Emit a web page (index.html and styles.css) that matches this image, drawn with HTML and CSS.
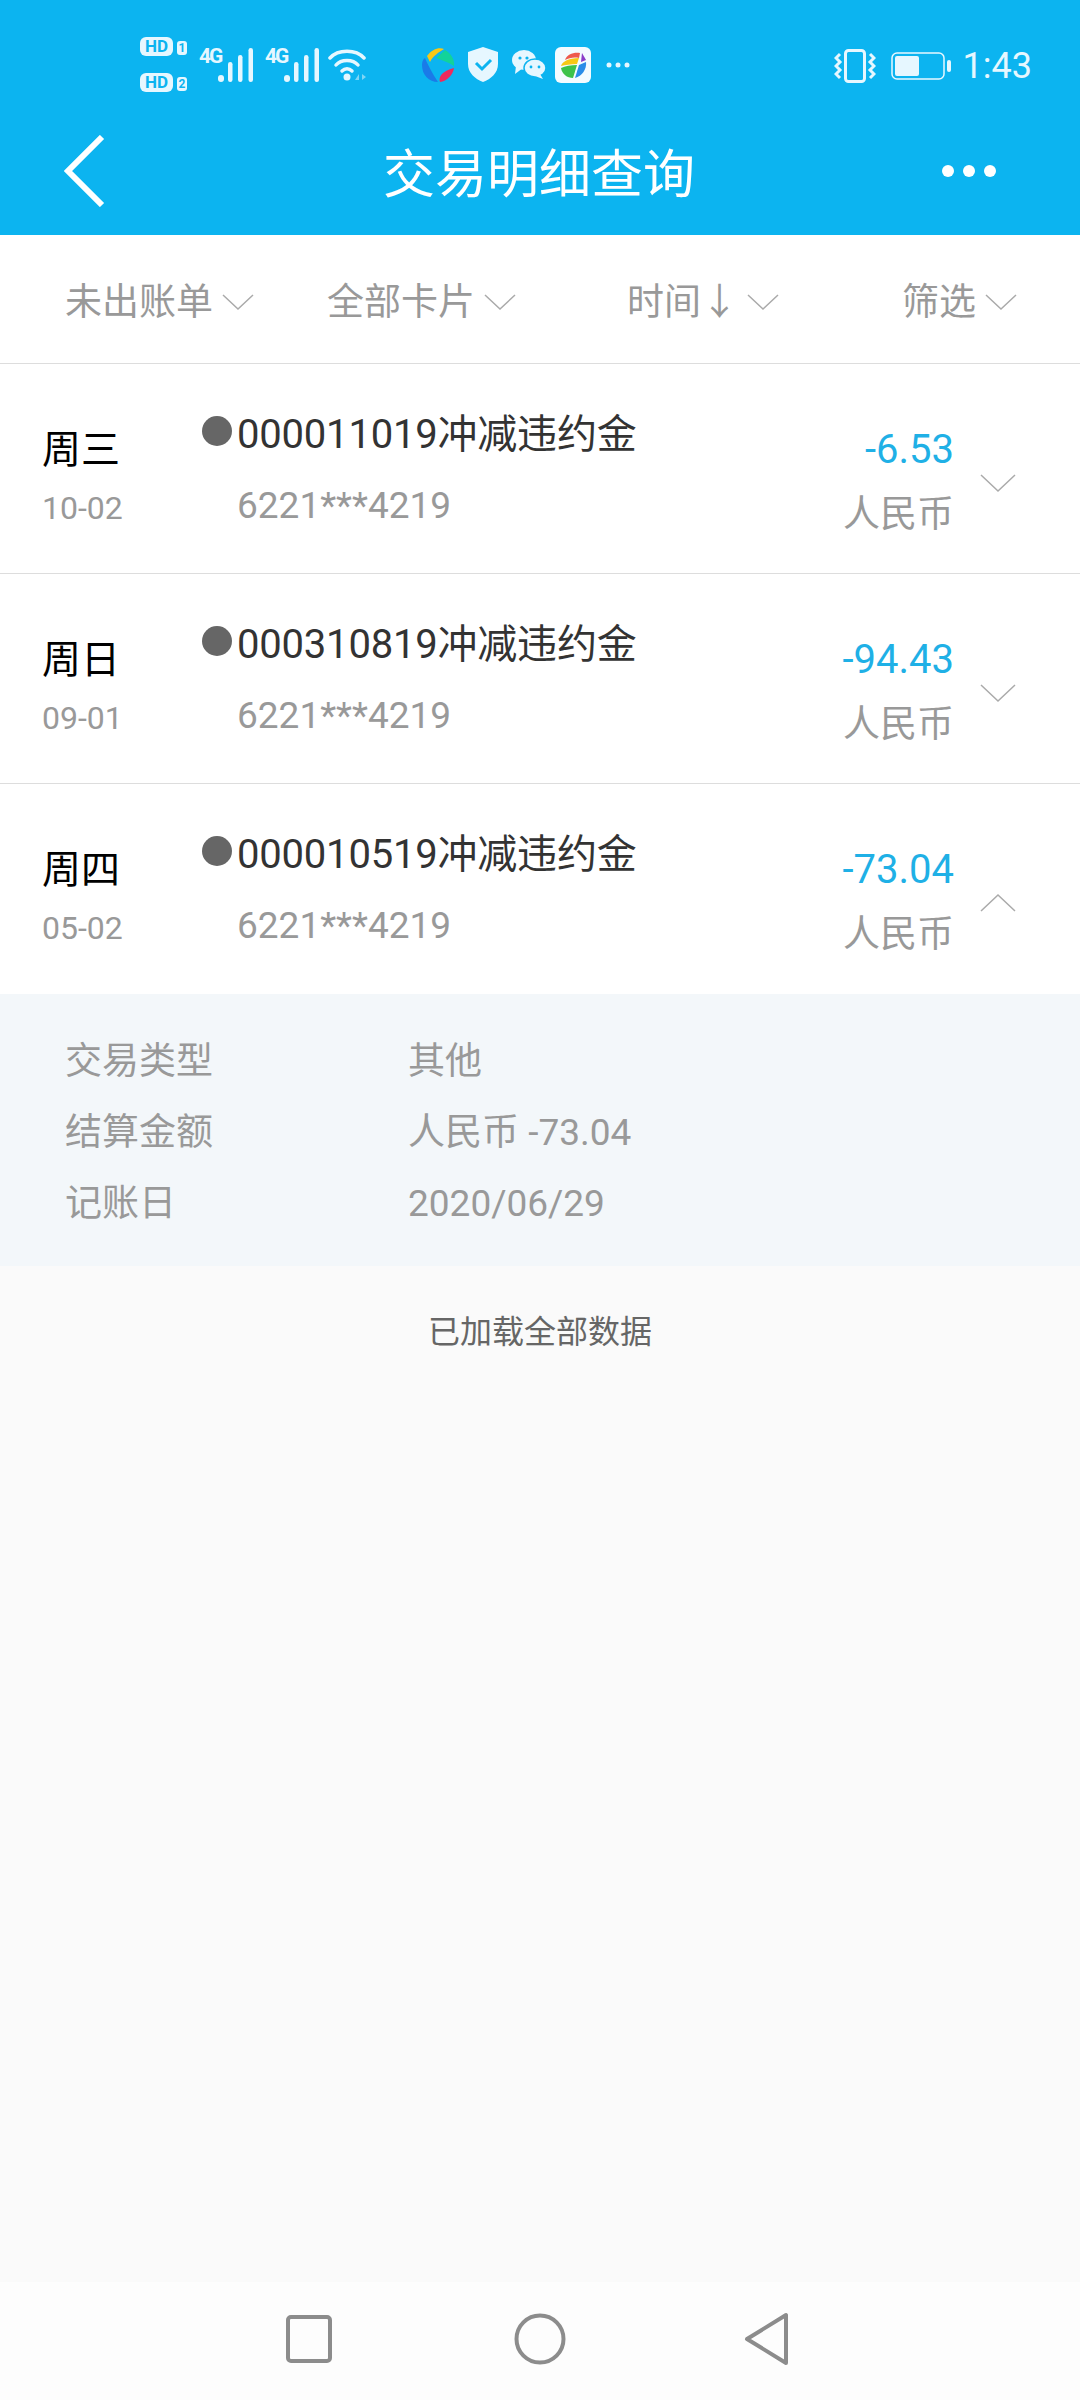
FILE: index.html
```html
<!DOCTYPE html>
<html lang="zh">
<head>
    <meta charset="UTF-8">
    <meta name="viewport" content="width=device-width, initial-scale=1.0">
    <title>交易明细查询</title>
    <link rel="stylesheet" href="styles.css">
</head>
<body>
    <div class="app">
        <header class="header">
            <div class="status-bar">
                <div class="status-left">
                    <div class="hd-col">
                        <div class="hd-row"><span class="hd">HD</span><span class="sim">1</span></div>
                        <div class="hd-row"><span class="hd">HD</span><span class="sim">2</span></div>
                    </div>
                    <span class="net">4G</span>
                    <svg class="signal" width="36" height="34" viewBox="0 0 36 34" fill="#e6f7ff">
                        <rect x="0" y="27" width="6" height="7" rx="3"/><rect x="10" y="14" width="4.5" height="20" rx="2.2"/><rect x="20" y="7" width="4.5" height="27" rx="2.2"/><rect x="30.5" y="0" width="4.5" height="34" rx="2.2"/>
                    </svg>
                    <span class="net">4G</span>
                    <svg class="signal" width="36" height="34" viewBox="0 0 36 34" fill="#e6f7ff">
                        <rect x="0" y="27" width="6" height="7" rx="3"/><rect x="10" y="14" width="4.5" height="20" rx="2.2"/><rect x="20" y="7" width="4.5" height="27" rx="2.2"/><rect x="30.5" y="0" width="4.5" height="34" rx="2.2"/>
                    </svg>
                    <svg class="wifi" width="40" height="34" viewBox="0 0 40 34" fill="none" stroke="#e6f7ff" stroke-width="3.5" stroke-linecap="round">
                        <path d="M2 10 C10 1 28 1 36 10"/><path d="M8 17 C13 11 25 11 30 17"/><path d="M14 23 C17 20 21 20 24 23"/><circle cx="19" cy="29" r="3.5" fill="#e6f7ff" stroke="none"/>
                        <path d="M31 26 L27 32 H31 Z M34 26 L38 29 L34 32 Z" fill="#7fd5f5" stroke="none"/>
                    </svg>
                </div>
                <div class="status-apps">
                    <svg width="34" height="36" viewBox="0 0 34 36">
                        <path d="M6 9 C11 2 18 0 23 2 C18 5 12 9 9 15 Z" fill="#f7c815"/>
                        <path d="M24 3 C30 6 34 13 33 19 C27 15 20 13 15 11 Z" fill="#12d39a"/>
                        <path d="M33 21 C32 28 26 34 19 35 C17 30 21 24 33 21 Z" fill="#ee2a5c"/>
                        <path d="M17 35 C8 35 1 28 1 18 C1 15 2 12 4 11 C7 18 11 26 17 35 Z" fill="#1a7be8"/>
                    </svg>
                    <svg width="32" height="37" viewBox="0 0 32 37">
                        <path d="M16 1 L31 6 V18 C31 27 24 33 16 36 C8 33 1 27 1 18 V6 Z" fill="#e6f7ff"/>
                        <path d="M9 17 L15 23 L24 14" fill="none" stroke="#0cb4f0" stroke-width="3"/>
                    </svg>
                    <svg width="35" height="30" viewBox="0 0 35 30" fill="#e6f7ff">
                        <ellipse cx="13" cy="10" rx="12" ry="10"/><path d="M5 16 L4 24 L12 18 Z"/>
                        <ellipse cx="24" cy="18" rx="11" ry="9" stroke="#0cb4f0" stroke-width="1.5"/><path d="M29 24 L32 29 L24 26 Z"/>
                        <circle cx="9" cy="8" r="1.6" fill="#0cb4f0"/><circle cx="16" cy="8" r="1.6" fill="#0cb4f0"/><circle cx="20" cy="17" r="1.4" fill="#0cb4f0"/><circle cx="28" cy="17" r="1.4" fill="#0cb4f0"/>
                    </svg>
                    <svg class="app-tile" width="36" height="36" viewBox="0 0 36 36">
                        <rect width="36" height="36" rx="6" fill="#f4fbff"/>
                        <path d="M10 13 C12 7 19 5 25 6 L24 11 C19 10 14 11 10 13 Z" fill="#ee5a4c"/>
                        <path d="M6 19 C7 15 13 11 24 11 L22 17 C16 17 10 18 6 19 Z" fill="#f7c815"/>
                        <path d="M6 21 C10 19 16 18 22 18 L18 31 C12 31 7 27 6 21 Z" fill="#3cc24a"/>
                        <path d="M24 18 L31 15 C32 22 27 29 20 31 Z" fill="#2a8de8"/>
                        <path d="M27 6 L31 13 L26 15 Z" fill="#8a3cc8"/>
                    </svg>
                    <svg class="app-more" width="24" height="6" viewBox="0 0 24 6" fill="#e6f7ff"><circle cx="3" cy="3" r="2.5"/><circle cx="12" cy="3" r="2.5"/><circle cx="21" cy="3" r="2.5"/></svg>
                </div>
                <div class="status-right">
                    <svg width="42" height="34" viewBox="0 0 42 34" fill="none" stroke="#e6f7ff">
                        <rect x="11.5" y="1.5" width="19" height="31" rx="3" stroke-width="3"/>
                        <path d="M6 5 L2 9 L6 13 L2 17 L6 21 L2 25 L6 29 M36 5 L40 9 L36 13 L40 17 L36 21 L40 25 L36 29" stroke-width="3"/>
                    </svg>
                    <svg class="battery" width="60" height="28" viewBox="0 0 60 28">
                        <rect x="1" y="1" width="52" height="26" rx="5" fill="none" stroke="#e6f7ff" stroke-width="1.5"/>
                        <rect x="4" y="4" width="24" height="20" rx="2" fill="#e6f7ff"/>
                        <rect x="56" y="8" width="4" height="12" rx="2" fill="#e6f7ff"/>
                    </svg>
                    <span class="clock">1:43</span>
                </div>
            </div>
            <div class="nav-bar">
                <svg class="back" width="42" height="72" viewBox="0 0 42 72" fill="none" stroke="#fff" stroke-width="6"><path d="M38 2 L4 36 L38 70" /></svg>
                <h1>交易明细查询</h1>
                <svg class="more" width="56" height="14" viewBox="0 0 56 14" fill="#fff"><circle cx="7" cy="7" r="6"/><circle cx="28" cy="7" r="6"/><circle cx="49" cy="7" r="6"/></svg>
            </div>
        </header>

        <div class="filter-bar">
            <div class="filter filter-1">未出账单<svg class="chev" width="32" height="18" viewBox="0 0 32 18"><path d="M1 2 L16 16 L31 2"/></svg></div>
            <div class="filter filter-2">全部卡片<svg class="chev" width="32" height="18" viewBox="0 0 32 18"><path d="M1 2 L16 16 L31 2"/></svg></div>
            <div class="filter filter-3">时间<span class="arrow">↓</span><svg class="chev" width="32" height="18" viewBox="0 0 32 18"><path d="M1 2 L16 16 L31 2"/></svg></div>
            <div class="filter filter-4">筛选<svg class="chev" width="32" height="18" viewBox="0 0 32 18"><path d="M1 2 L16 16 L31 2"/></svg></div>
        </div>

        <div class="tx-row">
            <div class="tx-date"><div class="day">周三</div><div class="date">10-02</div></div>
            <span class="dot"></span>
            <div class="tx-main"><div class="title">000011019冲减违约金</div><div class="card">6221***4219</div></div>
            <div class="tx-amount"><div class="amount">-6.53</div><div class="currency">人民币</div></div>
            <svg class="chev row-chev" width="36" height="20" viewBox="0 0 36 20"><path d="M1 2 L18 18 L35 2"/></svg>
        </div>
        <div class="tx-row">
            <div class="tx-date"><div class="day">周日</div><div class="date">09-01</div></div>
            <span class="dot"></span>
            <div class="tx-main"><div class="title">000310819冲减违约金</div><div class="card">6221***4219</div></div>
            <div class="tx-amount"><div class="amount">-94.43</div><div class="currency">人民币</div></div>
            <svg class="chev row-chev" width="36" height="20" viewBox="0 0 36 20"><path d="M1 2 L18 18 L35 2"/></svg>
        </div>
        <div class="tx-row open">
            <div class="tx-date"><div class="day">周四</div><div class="date">05-02</div></div>
            <span class="dot"></span>
            <div class="tx-main"><div class="title">000010519冲减违约金</div><div class="card">6221***4219</div></div>
            <div class="tx-amount"><div class="amount">-73.04</div><div class="currency">人民币</div></div>
            <svg class="chev row-chev" width="36" height="20" viewBox="0 0 36 20"><path d="M1 18 L18 2 L35 18"/></svg>
        </div>

        <div class="detail">
            <div class="detail-row"><span class="detail-label">交易类型</span><span>其他</span></div>
            <div class="detail-row"><span class="detail-label">结算金额</span><span>人民币 -73.04</span></div>
            <div class="detail-row"><span class="detail-label">记账日</span><span>2020/06/29</span></div>
        </div>

        <div class="loaded">已加载全部数据</div>

        <nav class="sys-nav">
            <svg class="nav-square" width="48" height="48" viewBox="0 0 48 48" fill="none" stroke="#8c8c8c" stroke-width="4"><rect x="3" y="2" width="42" height="44" rx="3"/></svg>
            <svg width="52" height="52" viewBox="0 0 52 52" fill="none" stroke="#8c8c8c" stroke-width="4"><circle cx="26" cy="26" r="23.5"/></svg>
            <svg width="46" height="54" viewBox="0 0 46 54" fill="none" stroke="#8c8c8c" stroke-width="4" stroke-linejoin="round"><path d="M42 3 V51 L3 27 Z"/></svg>
        </nav>
    </div>
</body>
</html>
```

FILE: styles.css
```css
* {
    margin: 0;
    padding: 0;
    box-sizing: border-box;
}
body {
    font-family: Roboto, "Noto Sans CJK SC", sans-serif;
    background-color: #fafafa;
}
.app {
    width: 1080px;
    height: 2400px;
    display: flex;
    flex-direction: column;
}
.header {
    height: 235px;
    background-color: #0cb4f0;
    color: #fff;
}
.status-bar {
    height: 78px;
    padding-top: 30px;
    display: flex;
    align-items: flex-start;
}
.status-left {
    width: 372px;
    padding-left: 140px;
    display: flex;
    align-items: flex-start;
    flex-shrink: 0;
}
.hd-col {
    width: 58px;
    margin-top: 7px;
    flex-shrink: 0;
}
.hd-row {
    height: 36px;
    display: flex;
    align-items: flex-start;
}
.hd {
    width: 33px;
    height: 19px;
    background-color: #e6f7ff;
    color: #0cb4f0;
    border-radius: 6px;
    font-size: 17px;
    line-height: 19px;
    font-weight: 700;
    text-align: center;
}
.sim {
    width: 10px;
    height: 14px;
    margin: 4px 0 0 4px;
    background-color: #e6f7ff;
    color: #0cb4f0;
    border-radius: 3px;
    font-size: 12px;
    line-height: 14px;
    font-weight: 700;
    text-align: center;
}
.net {
    font-size: 21px;
    line-height: 16px;
    font-weight: 700;
    letter-spacing: -2px;
    color: #e6f7ff;
    width: 19px;
    flex-shrink: 0;
    margin-left: 1px;
    margin-top: 18px;
}
.signal + .net {
    margin-left: 11px;
}
.signal {
    flex-shrink: 0;
    margin-top: 18px;
}
.wifi {
    flex-shrink: 0;
    margin-top: 18px;
    margin-left: 8px;
}
.status-apps {
    margin-left: 49px;
    margin-top: 16px;
    display: flex;
    align-items: center;
    gap: 12px;
}
.app-tile {
    margin-left: -3px;
}
.app-more {
    margin-left: 3px;
}
.status-right {
    margin-left: auto;
    margin-top: 18px;
    padding-right: 48px;
    display: flex;
    align-items: center;
    gap: 12px;
    color: #e6f7ff;
}
.battery {
    margin-left: 3px;
}
.clock {
    font-size: 36px;
    line-height: 36px;
}
.nav-bar {
    height: 157px;
    padding: 28px 83px 0 64px;
    display: flex;
    align-items: center;
}
.nav-bar h1 {
    flex: 1;
    padding-left: 31px;
    font-size: 52px;
    font-weight: 400;
    color: #fff;
    text-align: center;
}
.filter-bar {
    height: 129px;
    background-color: #fff;
    border-bottom: 1px solid #ddd;
    display: flex;
    align-items: center;
    color: #999;
    font-size: 37px;
}
.filter {
    display: flex;
    align-items: center;
    gap: 9px;
}
.filter .chev {
    margin-top: 5px;
}
.filter-1 { margin-left: 65px; }
.filter-2 { margin-left: 73px; }
.filter-3 { margin-left: 111px; }
.filter-4 { margin-left: 123px; }
.arrow {
    margin-left: -9px;
}
.chev {
    fill: none;
    stroke: #aaa;
    stroke-width: 1.5;
}
.tx-row {
    height: 210px;
    background-color: #fff;
    border-bottom: 1px solid #ddd;
    position: relative;
    display: flex;
}
.tx-row.open {
    border-bottom: none;
}
.tx-date {
    width: 202px;
    padding: 61px 0 0 42px;
    flex-shrink: 0;
}
.day {
    font-size: 39px;
    line-height: 50px;
    color: #000;
}
.date {
    font-size: 32px;
    line-height: 38px;
    margin-top: 14px;
    color: #999;
}
.dot {
    width: 30px;
    height: 30px;
    margin-top: 52px;
    border-radius: 50%;
    background-color: #666;
    flex-shrink: 0;
}
.tx-main {
    width: 500px;
    padding: 43px 0 0 5px;
}
.title {
    font-size: 40px;
    line-height: 56px;
    letter-spacing: -0.2px;
    color: #333;
}
.card {
    font-size: 37px;
    line-height: 42px;
    margin-top: 22px;
    color: #999;
}
.tx-amount {
    width: 222px;
    text-align: right;
    padding-top: 62px;
    flex-shrink: 0;
}
.amount {
    font-size: 40px;
    line-height: 48px;
    color: #1fb0e6;
}
.currency {
    font-size: 37px;
    line-height: 50px;
    margin-top: 16px;
    color: #999;
}
.row-chev {
    margin: 109px 0 0 26px;
}
.detail {
    height: 272px;
    padding: 42px 65px 0;
    background-color: #f3f7fa;
    color: #999;
    font-size: 37px;
}
.detail-row {
    height: 71px;
    line-height: 52px;
    display: flex;
}
.detail-label {
    width: 343px;
}
.loaded {
    margin-top: 43px;
    font-size: 32px;
    line-height: 46px;
    color: #666;
    text-align: center;
}
.sys-nav {
    margin-top: auto;
    height: 118px;
    padding: 0 5px 4px 0;
    background-color: #fdfdfd;
    display: flex;
    align-items: center;
    justify-content: center;
    gap: 178px;
}
.nav-square {
    margin-right: 3px;
}
```
